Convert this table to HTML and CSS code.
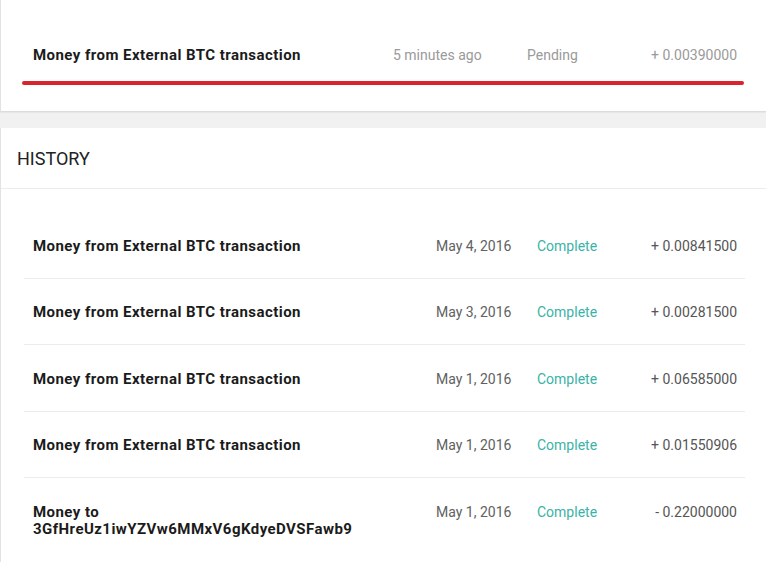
FILE: index.html
```html
<!DOCTYPE html>
<html>
<head>
<meta charset="utf-8">
<link rel="stylesheet" href="styles.css">
</head>
<body>
<section class="card card-top">
  <div class="pending">
    <div class="row row-top">
      <div class="name">Money from External BTC transaction</div>
      <div class="date">5 minutes ago</div>
      <div class="status">Pending</div>
      <div class="amount">+ 0.00390000</div>
    </div>
    <div class="progress"></div>
  </div>
</section>
<section class="card card-history">
  <h2 class="title">HISTORY</h2>
  <div class="list">
    <div class="row row-hist">
      <div class="name">Money from External BTC transaction</div>
      <div class="date">May 4, 2016</div>
      <div class="status done">Complete</div>
      <div class="amount">+ 0.00841500</div>
    </div>
    <div class="row row-hist">
      <div class="name">Money from External BTC transaction</div>
      <div class="date">May 3, 2016</div>
      <div class="status done">Complete</div>
      <div class="amount">+ 0.00281500</div>
    </div>
    <div class="row row-hist">
      <div class="name">Money from External BTC transaction</div>
      <div class="date">May 1, 2016</div>
      <div class="status done">Complete</div>
      <div class="amount">+ 0.06585000</div>
    </div>
    <div class="row row-hist">
      <div class="name">Money from External BTC transaction</div>
      <div class="date">May 1, 2016</div>
      <div class="status done">Complete</div>
      <div class="amount">+ 0.01550906</div>
    </div>
    <div class="row row-hist">
      <div class="name">Money to 3GfHreUz1iwYZVw6MMxV6gKdyeDVSFawb9</div>
      <div class="date">May 1, 2016</div>
      <div class="status done">Complete</div>
      <div class="amount">- 0.22000000</div>
    </div>
  </div>
</section>
</body>
</html>
```

FILE: styles.css
```css
html, body {
  margin: 0;
  padding: 0;
}
body {
  background: #f1f1f1;
  font-family: Roboto, "Liberation Sans", sans-serif;
  width: 766px;
  height: 562px;
  overflow: hidden;
}
.card {
  background: #fff;
  border-left: 1px solid #e2e2e2;
}
.card-top {
  height: 111px;
  border-bottom: 1px solid #dcdcdc;
  box-shadow: 0 1px 1px rgba(0,0,0,0.04);
  margin-bottom: 16px;
}
.pending {
  padding: 45px 22px 0 21px;
}
.row {
  display: grid;
  align-items: start;
  line-height: 20px;
}
.row-top {
  grid-template-columns: 1fr 132px 110px 100px;
  padding: 0 7px 0 11px;
}
.row-top .date {
  margin-left: -2px;
}
.progress {
  margin-top: 16px;
  height: 4px;
  border-radius: 2px;
  background: #d9232d;
}
.name {
  font-weight: bold;
  font-size: 15px;
  letter-spacing: 0.45px;
  color: #1b1b1b;
  max-width: 350px;
}
.date, .status, .amount {
  font-size: 14px;
}
.row-top .date, .row-top .status, .row-top .amount {
  color: #9a9a9a;
}
.amount {
  text-align: right;
}
.card-history {
  height: 500px;
}
.title {
  margin: 0;
  font-weight: normal;
  font-size: 18px;
  color: #222;
  line-height: 20px;
  padding: 21px 0 19px 16px;
  border-bottom: 1px solid #ececec;
}
.list {
  padding: 23px 21px 0 23px;
}
.row-hist {
  grid-template-columns: 1fr 101px 100px 100px;
  line-height: 17px;
  padding: 25.5px 8px 23px 9px;
  border-bottom: 1px solid #ececec;
}
.row-hist:last-child {
  border-bottom: none;
}
.row-hist .date {
  color: #616161;
}
.row-hist .amount {
  color: #555;
}
.status.done {
  color: #3ab3a7;
}
```
